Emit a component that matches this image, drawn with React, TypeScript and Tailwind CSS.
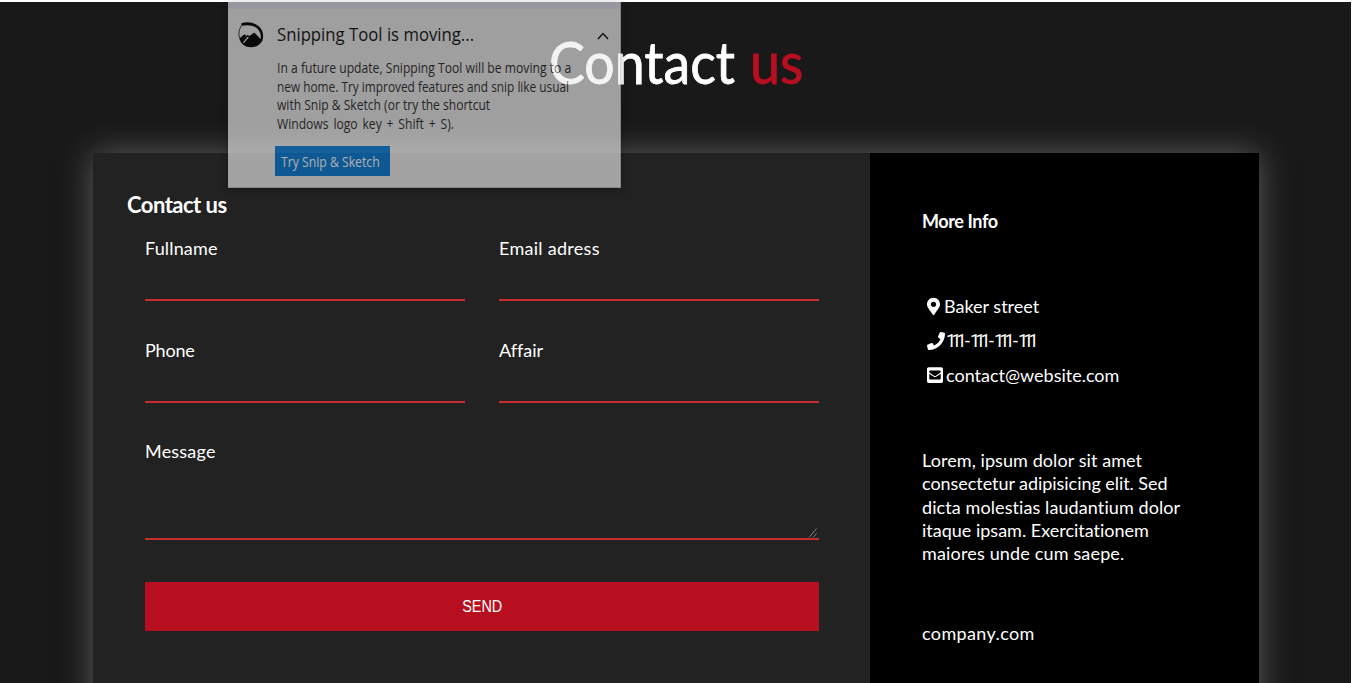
import { Fragment, type ReactNode } from "react";
import { FaEnvelopeSquare, FaMapMarkerAlt, FaPhone } from "react-icons/fa";

function Field({ label, tracking }: { label: string; tracking: string }) {
  return (
    <label className="block">
      <span className={`block h-6 leading-6 ${tracking}`}>{label}</span>
      <input className="block h-[41px] w-full border-b-2 border-[#c92c2d] bg-transparent outline-none" />
    </label>
  );
}

function InfoRow({ icon, children }: { icon: ReactNode; children: ReactNode }) {
  return (
    <li className="flex h-6 items-center gap-1 whitespace-nowrap leading-6">
      {icon}
      {children}
    </li>
  );
}

function PhoneNumber({ value }: { value: string }) {
  return (
    <span className="-ml-[3px] flex font-['Roboto',sans-serif]">
      {value.split("-").map((group, i) => (
        <Fragment key={i}>
          {i > 0 && <span className="ml-[4px] w-[5px]">-</span>}
          <span className="w-[15px] tracking-[-4.900px]">{group}</span>
        </Fragment>
      ))}
    </span>
  );
}

function SnipLogo() {
  return (
    <svg viewBox="0 0 26 26" className="mt-[2px] size-[26px] shrink-0">
      <path d="M3.700 3.500C1 7 .2 11.500 1.600 16" fill="none" stroke="#333" strokeWidth="1" />
      <path d="M3.400 1.200C10-.9 17.500.6 22 5.500c3.500 4.300 4 9.500 2 14l-1.700-.7C23.600 14 22.500 9.500 19 6.200 15 3 9.500 2.600 3.400 3.700z" />
      <path d="M1.300 16.500 6.500 12.300l1.800 1.400-4 4.600 5.300-5.500 1.700 1.200L16.300 10.500l8 8.200C22 23 17.500 25.300 12.800 25.300 7.500 25.200 2.800 22 1.300 16.500z" />
      <path d="M5.400 20.800 10.300 15" stroke="#ededed" strokeWidth="1.200" />
    </svg>
  );
}

function SnipNotice() {
  return (
    <aside className="absolute left-[228px] top-[2px] flex h-[186px] w-[393px] flex-col border-r border-b border-[#c4c4c4] bg-[#ededed] font-['Open_Sans',sans-serif] text-black opacity-[0.635] shadow-[0_2px_8px_rgba(0,0,0,0.4)]">
      <div className="h-[7px] shrink-0 bg-[#dfdfec]" />
      <div className="flex pl-[10px] pt-[11px]">
        <SnipLogo />
        <div className="ml-[13px] flex-1 whitespace-nowrap">
          <div className="flex h-[28px] items-center justify-between pr-[13px]">
            <h2 className="w-[200px] origin-left scale-x-[0.880] text-[19px] text-[#111]">Snipping Tool is moving...</h2>
            <svg viewBox="0 0 12 8" className="mt-[3px] h-2 w-3">
              <path d="M1 7 6 1.500 11 7" fill="none" stroke="#111" strokeWidth="1.500" />
            </svg>
          </div>
          <div className="mt-[11px] text-[14px] leading-[18.500px] text-[#2c2c2c]">
            <p className="origin-left scale-x-[0.868]">In a future update, Snipping Tool will be moving to a</p>
            <p className="origin-left scale-x-[0.847]">new home. Try improved features and snip like usual</p>
            <p className="origin-left scale-x-[0.862]">with Snip &amp; Sketch (or try the shortcut</p>
            <p className="origin-left scale-x-[0.865] [word-spacing:2px]">Windows logo key + Shift + S).</p>
          </div>
          <button className="-ml-[2px] mt-[13px] block h-[30px] w-[115px] bg-[#0478d4] pl-[6px] text-left text-[14px] text-white">
            <span className="inline-block origin-left scale-x-[0.872]">Try Snip &amp; Sketch</span>
          </button>
        </div>
      </div>
    </aside>
  );
}

export default function App() {
  return (
    <div className="relative h-[683px] w-[1352px] overflow-hidden bg-white pr-px pt-[2px] font-['Lato',sans-serif] text-[18px] text-white [font-variant-ligatures:none]">
      <div className="flex h-full flex-col overflow-hidden bg-[#191919] pl-[93px] pr-[92px]">
        <h1 className="flex h-[151px] shrink-0 pl-[456px] pt-[24px] text-[58px] leading-[72px]">
          <span className="w-[201px] origin-left scale-x-[0.925] [-webkit-text-stroke:0.8px_white]">Contact</span>
          <span className="origin-left scale-x-[0.930] text-[#b80f20] [-webkit-text-stroke:0.8px_#b80f20]">us</span>
        </h1>
        <main className="flex h-[600px] shrink-0 shadow-[0_0_30px_#5c5c5c]">
          <section className="w-[777px] bg-[#222222] pt-10">
            <h2 className="h-6 pl-[34px] text-[22px] font-bold leading-6 tracking-[-0.520px]">Contact us</h2>
            <form className="mt-[19px] px-[52px]">
              <div className="grid grid-cols-[320px_320px] gap-x-[34px] gap-y-[36.500px]">
                <Field label="Fullname" tracking="tracking-[0.150px]" />
                <Field label="Email adress" tracking="tracking-[0.280px]" />
                <Field label="Phone" tracking="tracking-[-0.200px]" />
                <Field label="Affair" tracking="tracking-[0.000px]" />
              </div>
              <label className="relative mt-[36.500px] block">
                <span className="block h-6 leading-6 tracking-[0.200px]">Message</span>
                <textarea className="block h-[77px] w-[674px] resize-none border-b-2 border-[#c92c2d] bg-transparent outline-none" />
                <svg viewBox="0 0 10 10" className="absolute right-0 bottom-[2px] size-[10px]">
                  <path d="M1 9.500 8.500.500M5 9.500 8.500 5.500" fill="none" stroke="#8c8c8c" strokeWidth="0.900" />
                </svg>
              </label>
              <button
                type="button"
                className="mt-[42px] block h-[49px] w-[674px] bg-[#b80f20] font-['Liberation_Sans',sans-serif] text-[16px]"
              >
                <span className="inline-block scale-x-[0.900]">SEND</span>
              </button>
            </form>
          </section>
          <section className="flex-1 bg-black pl-[52px] pt-[56px]">
            <h3 className="h-6 font-bold leading-6 tracking-[-0.400px]">More Info</h3>
            <ul className="mt-[61px] flex flex-col gap-[10.500px] pl-[5px]">
              <InfoRow icon={<FaMapMarkerAlt className="h-[19px] w-[13px]" />}>Baker street</InfoRow>
              <InfoRow icon={<FaPhone className="size-[18px]" />}>
                <PhoneNumber value="111-111-111-111" />
              </InfoRow>
              <InfoRow icon={<FaEnvelopeSquare className="h-[18px] w-[16px]" preserveAspectRatio="none" />}>
                <span className="-ml-px">contact@website.com</span>
              </InfoRow>
            </ul>
            <p className="mt-[62px] whitespace-nowrap leading-[23.300px]">
              <span className="block tracking-[0.080px]">Lorem, ipsum dolor sit amet</span>
              <span className="block tracking-[-0.050px]">consectetur adipisicing elit. Sed</span>
              <span className="block tracking-[0.090px]">dicta molestias laudantium dolor</span>
              <span className="block">itaque ipsam. Exercitationem</span>
              <span className="block tracking-[0.160px]">maiores unde cum saepe.</span>
            </p>
            <p className="mt-[56px] leading-6 tracking-[0.370px]">company.com</p>
          </section>
        </main>
      </div>
      <SnipNotice />
    </div>
  );
}
